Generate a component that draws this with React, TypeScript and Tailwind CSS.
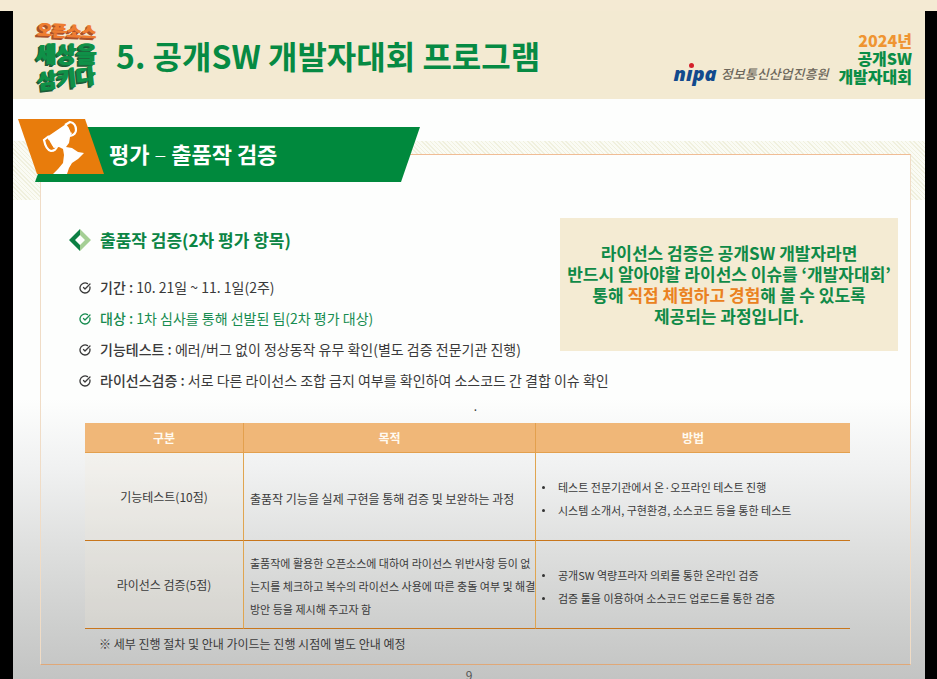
import type { ReactNode } from "react";
import { CircleCheckBig } from "lucide-react";

type Item = { label: string; text: string; accent?: boolean };

const items: Item[] = [
  { label: "기간", text: "10. 21일 ~ 11. 1일(2주)" },
  { label: "대상", text: "1차 심사를 통해 선발된 팀(2차 평가 대상)", accent: true },
  { label: "기능테스트", text: "에러/버그 없이 정상동작 유무 확인(별도 검증 전문기관 진행)" },
  { label: "라이선스검증", text: "서로 다른 라이선스 조합 금지 여부를 확인하여 소스코드 간 결합 이슈 확인" },
];

function SloganLogo() {
  return (
    <div className="flex w-[66px] flex-col items-center font-black whitespace-nowrap">
      <span className="rotate-3 text-[16px] leading-[20px] text-[#ee7d31] [text-shadow:1px_0_0_#ee7d31,-1px_1px_0_#a8502a,-2px_2px_0_#a8502a]">
        오픈소스
      </span>
      <span className="text-[22px] leading-[24px] text-[#0f9148] [text-shadow:1px_0_0_#0f9148,-1px_1px_0_#1b6a3c,-2px_2px_0_#1b5a36]">
        세상을
      </span>
      <span className="-rotate-6 text-[21px] leading-[26px] text-[#0f9148] [text-shadow:1px_0_0_#0f9148,-1px_1px_0_#1b6a3c,-2px_2px_0_#1b5a36]">
        삼키다
      </span>
    </div>
  );
}

function NipaLogo() {
  return (
    <div className="flex items-center gap-1">
      <span className="relative font-['Open_Sans'] text-[20px] leading-[22px] font-extrabold text-[#124a8d] italic">
        nıpa
        <span className="absolute top-0 left-[15px] size-[5px] rounded-full bg-[#d4202c]" />
      </span>
      <span className="text-[13px] leading-[20px] font-medium text-[#6d675b] italic">정보통신산업진흥원</span>
    </div>
  );
}

function Trophy() {
  return (
    <svg viewBox="0 0 86 55" className="h-[55px] w-[86px]" aria-hidden="true">
      <path
        d="M29 18 48 5 51 9 54 14 52 18 51 24 48 28 54 29 60 33 66 34 60 40 54 44 51 49 49 55 35 55 40 50 45 44 46 36 45 30 41 28 36 29 33 26Z"
        fill="#fff"
      />
      <path d="M47 6 52 3C57 4 58 7 58 11C58 14 56 16 52 17" fill="none" stroke="#fff" strokeWidth="2.2" />
      <path d="M31 17 26 21C27 26 29 31 33 32C36 32 39 30 39 27" fill="none" stroke="#fff" strokeWidth="2.2" />
      <path d="M54 7 55 12 53 14 51 9Z" fill="#e87c0c" />
      <path d="M29 22 31 21 35 28 32 29Z" fill="#e87c0c" />
    </svg>
  );
}

function Diamond() {
  return (
    <svg viewBox="0 0 22 22" className="size-[22px] shrink-0" aria-hidden="true">
      <path d="M11 0 0 11 11 22V16L6 11 11 6Z" fill="#0b7f43" />
      <path d="M11 0 22 11 11 22V16L16 11 11 6Z" fill="#a5cf95" />
    </svg>
  );
}

function Bullets({ lines }: { lines: string[] }) {
  return (
    <ul className="pt-1 text-[11px] leading-[23px]">
      {lines.map((line) => (
        <li key={line} className="flex items-center gap-[13px] whitespace-nowrap">
          <span className="size-[3px] rounded-full bg-[#333]" />
          {line}
        </li>
      ))}
    </ul>
  );
}

function Row({ name, purpose, methods }: { name: string; purpose: ReactNode; methods: string[] }) {
  return (
    <tr className="h-[88px]">
      <th
        scope="row"
        className="border-r border-b border-r-[#e0a550] border-b-[#c8761c] bg-[#f5ecd8]/20 text-center text-[12px] font-normal"
      >
        {name}
      </th>
      <td className="border-r border-b border-r-[#e0a550] border-b-[#c8761c] pt-1 pl-[6px] whitespace-nowrap">
        {purpose}
      </td>
      <td className="border-b border-b-[#c8761c] pl-[6px]">
        <Bullets lines={methods} />
      </td>
    </tr>
  );
}

export default function App() {
  return (
    <div className="flex min-h-screen flex-col bg-black font-['Noto_Sans_CJK_KR',sans-serif] text-[#3a3a3a]">
      <div className="h-[11px] bg-[#f4ead3]" />
      <div className="mr-3 ml-[13px] flex grow flex-col bg-white">
        <header className="flex h-[88px] items-center bg-[#f3ead2] pr-[13px] pl-5">
          <SloganLogo />
          <h1 className="ml-[17px] text-[32px] leading-[46px] font-bold whitespace-nowrap text-[#068a43]">
            5. 공개SW 개발자대회 프로그램
          </h1>
          <div className="ml-auto flex items-end gap-[10px] pt-[6px] whitespace-nowrap">
            <NipaLogo />
            <p className="text-right text-[16px] leading-[18px] font-black text-[#0a8d46]">
              <span className="text-[#ef9532]">2024년</span>
              <br />
              공개SW
              <br />
              개발자대회
            </p>
          </div>
        </header>

        <main className="flex grow flex-col bg-[linear-gradient(#fdfefd_0,#fdfefd_300px,#f0f1f1_370px,#dedfde_450px,#cfd0cf_520px,#c3c4c3_100%)] pt-5">
          <div className="relative ml-[5px] grid w-[402px] grid-cols-[17px_1fr] grid-rows-[8px_47px_8px]">
            <div className="col-start-2 row-span-2 row-start-2 bg-[#00893d] [clip-path:polygon(20px_0,100%_0,366px_100%,0_100%)]">
              <h2 className="pl-[74px] text-[22px] leading-[52px] font-bold text-white">
                평가 <span className="font-light">–</span> 출품작 검증
              </h2>
            </div>
            <div className="col-span-2 col-start-1 row-span-2 row-start-1 w-[86px] bg-[#e87c0c] [clip-path:polygon(0_0,67px_0,100%_100%,19px_100%)]">
              <Trophy />
            </div>
          </div>

          <div className="-mt-[41px] bg-[repeating-linear-gradient(45deg,#f0f0de_0,#f0f0de_1px,#fafbf4_1px,#fafbf4_3px)] bg-[length:100%_59px] bg-no-repeat pt-[13px] pr-[14px] pl-[27px]">
            <section className="border border-x-[#f0dcc6] border-t-[#f0bd95] border-b-[#e0a878] bg-[linear-gradient(#fdfefd_0,#fdfefd_60px,transparent_60px)] pt-[63px] pb-[10px]">
              <div className="grid grid-cols-1 pr-[12px] pl-[28px]">
                <div className="col-start-1 row-start-1 whitespace-nowrap">
                  <h3 className="mt-[8px] flex items-center gap-[9px] text-[17px] leading-[28px] font-bold text-[#0b8544]">
                    <Diamond />
                    출품작 검증(2차 평가 항목)
                  </h3>
                  <ul className="mt-[18px] pl-[10px] text-[14px] leading-[31px]">
                    {items.map((item) => (
                      <li
                        key={item.label}
                        className={
                          item.accent ? "flex items-center gap-[9px] text-[#178c50]" : "flex items-center gap-[9px]"
                        }
                      >
                        <CircleCheckBig className="size-3 shrink-0" strokeWidth={2.6} />
                        <span>
                          <b className="font-medium">{item.label} :</b> {item.text}
                        </span>
                      </li>
                    ))}
                  </ul>
                </div>
                <aside className="col-start-1 row-start-1 h-[133px] w-[338px] justify-self-end bg-[#f4ebd3] pt-[24px] text-center text-[17px] leading-[21px] font-bold whitespace-nowrap text-[#0f8a47]">
                  <p>
                    라이선스 검증은 공개SW 개발자라면
                    <br />
                    반드시 알아야할 라이선스 이슈를 ‘개발자대회’
                    <br />
                    통해 <span className="text-[#ea8120]">직접 체험하고 경험</span>해 볼 수 있도록
                    <br />
                    제공되는 과정입니다.
                  </p>
                </aside>
              </div>

              <p className="h-[27px] text-center text-[12px] leading-[20px]">.</p>

              <div className="pr-[60px] pl-[44px]">
                <table className="w-full table-fixed border-separate border-spacing-0 text-[12px]">
                  <colgroup>
                    <col className="w-[159px]" />
                    <col className="w-[292px]" />
                    <col />
                  </colgroup>
                  <thead>
                    <tr className="h-[30px] bg-[#f0b778] text-[#fffaf0]">
                      <th className="border-r border-b border-[#e3a04e] font-bold">구분</th>
                      <th className="border-r border-b border-[#e3a04e] font-bold">목적</th>
                      <th className="border-b border-[#e3a04e] font-bold">방법</th>
                    </tr>
                  </thead>
                  <tbody>
                    <Row
                      name="기능테스트(10점)"
                      purpose="출품작 기능을 실제 구현을 통해 검증 및 보완하는 과정"
                      methods={[
                        "테스트 전문기관에서 온·오프라인 테스트 진행",
                        "시스템 소개서, 구현환경, 소스코드 등을 통한 테스트",
                      ]}
                    />
                    <Row
                      name="라이선스 검증(5점)"
                      purpose={
                        <p className="text-[11px] leading-[23px]">
                          출품작에 활용한 오픈소스에 대하여 라이선스 위반사항 등이 없
                          <br />
                          는지를 체크하고 복수의 라이선스 사용에 따른 충돌 여부 및 해결
                          <br />
                          방안 등을 제시해 주고자 함
                        </p>
                      }
                      methods={[
                        "공개SW 역량프라자 의뢰를 통한 온라인 검증",
                        "검증 툴을 이용하여 소스코드 업로드를 통한 검증",
                      ]}
                    />
                  </tbody>
                </table>
                <p className="mt-[5px] pl-[14px] text-[12px] leading-[20px]">
                  ※ 세부 진행 절차 및 안내 가이드는 진행 시점에 별도 안내 예정
                </p>
              </div>
            </section>
          </div>
          <footer className="h-[14px] overflow-hidden text-center text-[12px] leading-[20px] text-[#555]">9</footer>
        </main>
      </div>
    </div>
  );
}
